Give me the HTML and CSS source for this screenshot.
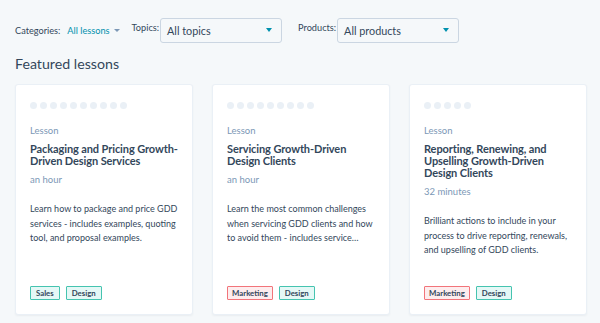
FILE: index.html
```html
<!DOCTYPE html>
<html>
<head>
<meta charset="utf-8">
<link rel="stylesheet" href="styles.css">
</head>
<body>
<div class="page">
  <div class="filters">
    <div class="filter">
      <span class="label">Categories:</span>
      <span class="link">All lessons</span>
      <span class="mini-caret"></span>
    </div>
    <div class="filter top">
      <span class="label">Topics:</span>
      <div class="select"><span>All topics</span><span class="caret"></span></div>
    </div>
    <div class="filter top">
      <span class="label">Products:</span>
      <div class="select"><span>All products</span><span class="caret"></span></div>
    </div>
  </div>
  <h2 class="heading">Featured lessons</h2>
  <div class="cards">
    <div class="card">
      <div class="dots"><i></i><i></i><i></i><i></i><i></i><i></i><i></i><i></i><i></i><i></i></div>
      <div class="kind">Lesson</div>
      <div class="title">Packaging and Pricing Growth-Driven Design Services</div>
      <div class="time">an hour</div>
      <p class="desc">Learn how to package and price GDD services - includes examples, quoting tool, and proposal examples.</p>
      <div class="tags"><span class="tag teal">Sales</span><span class="tag teal">Design</span></div>
    </div>
    <div class="card">
      <div class="dots"><i></i><i></i><i></i><i></i><i></i><i></i><i></i><i></i><i></i></div>
      <div class="kind">Lesson</div>
      <div class="title">Servicing Growth-Driven Design Clients</div>
      <div class="time">an hour</div>
      <p class="desc">Learn the most common challenges when servicing GDD clients and how to avoid them - includes service…</p>
      <div class="tags"><span class="tag coral">Marketing</span><span class="tag teal">Design</span></div>
    </div>
    <div class="card">
      <div class="dots"><i></i><i></i><i></i><i></i><i></i></div>
      <div class="kind">Lesson</div>
      <div class="title">Reporting, Renewing, and Upselling Growth-Driven Design Clients</div>
      <div class="time">32 minutes</div>
      <p class="desc">Brilliant actions to include in your process to drive reporting, renewals, and upselling of GDD clients.</p>
      <div class="tags"><span class="tag coral">Marketing</span><span class="tag teal">Design</span></div>
    </div>
  </div>
</div>
</body>
</html>
```
FILE: styles.css
```css
* { box-sizing: border-box; }
html, body { margin: 0; padding: 0; }
body {
  background: #f5f8fa;
  font-family: Lato, "Open Sans", sans-serif;
  color: #33475b;
  width: 600px;
  height: 323px;
  overflow: hidden;
}
.page { padding: 18px 13px 0 15px; }
.filters { display: flex; align-items: center; height: 24px; }
.filter { display: flex; align-items: center; }
.filter.top { align-items: flex-start; }
.filter.top .label { margin-top: 4px; margin-right: 1px; }
.label { font-size: 9.2px; color: #33475b; }
.link { font-size: 9.2px; color: #0091ae; margin-left: 7px; }
.mini-caret {
  width: 0; height: 0; margin-left: 4px; margin-top: 1px;
  border-left: 3px solid transparent; border-right: 3px solid transparent;
  border-top: 3px solid #7c98b6;
}
.filter:nth-child(2) { margin-left: 12px; }
.filter:nth-child(3) { margin-left: 16px; }
.select {
  width: 122px; height: 25px;
  background: #f5f8fa;
  border: 1px solid #cbd6e2;
  border-radius: 3px;
  display: flex; align-items: center; justify-content: space-between;
  padding: 0 9px 0 6px;
  font-size: 10.8px; color: #33475b;
}
.caret {
  width: 0; height: 0;
  border-left: 3.5px solid transparent; border-right: 3.5px solid transparent;
  border-top: 4px solid #0091ae;
}
.heading {
  margin: 13px 0 0; font-size: 14.2px; font-weight: 400; line-height: 18px;
  color: #33475b;
}
.cards {
  margin-top: 11px;
  display: grid; grid-template-columns: repeat(3, 178px); column-gap: 19px;
}
.card {
  background: #fff;
  border: 1px solid #eaf0f6;
  border-radius: 3px;
  box-shadow: 0 1px 2px rgba(45,62,80,0.06);
  height: 231px;
  padding: 17px 11px 14px 14px;
  display: flex; flex-direction: column;
}
.dots { display: flex; gap: 3px; height: 7px; }
.dots i { width: 7px; height: 7px; border-radius: 50%; background: #eaf0f6; display: block; }
.kind { margin-top: 16px; font-size: 9.5px; line-height: 12px; color: #7c98b6; }
.title { margin-top: 6px; font-size: 11px; font-weight: 700; line-height: 12px; color: #33475b; letter-spacing: -0.1px; }
.time { margin-top: 7px; font-size: 9.5px; line-height: 12px; color: #7c98b6; }
.desc { margin: 16px 0 0; font-size: 9px; line-height: 14.5px; color: #33475b; padding-right: 2px; }
.tags { margin-top: auto; display: flex; gap: 6px; }
.tag {
  font-size: 7.8px; font-weight: 700; line-height: 12px; padding: 0 5px;
  border: 1px solid; border-radius: 1px; color: #33475b;
}
.tag.coral { padding: 0 4px; }
.tag.teal { border-color: #45c4b0; background: #e5f8f6; }
.tag.coral { border-color: #f2747a; background: #fdedee; }
```
